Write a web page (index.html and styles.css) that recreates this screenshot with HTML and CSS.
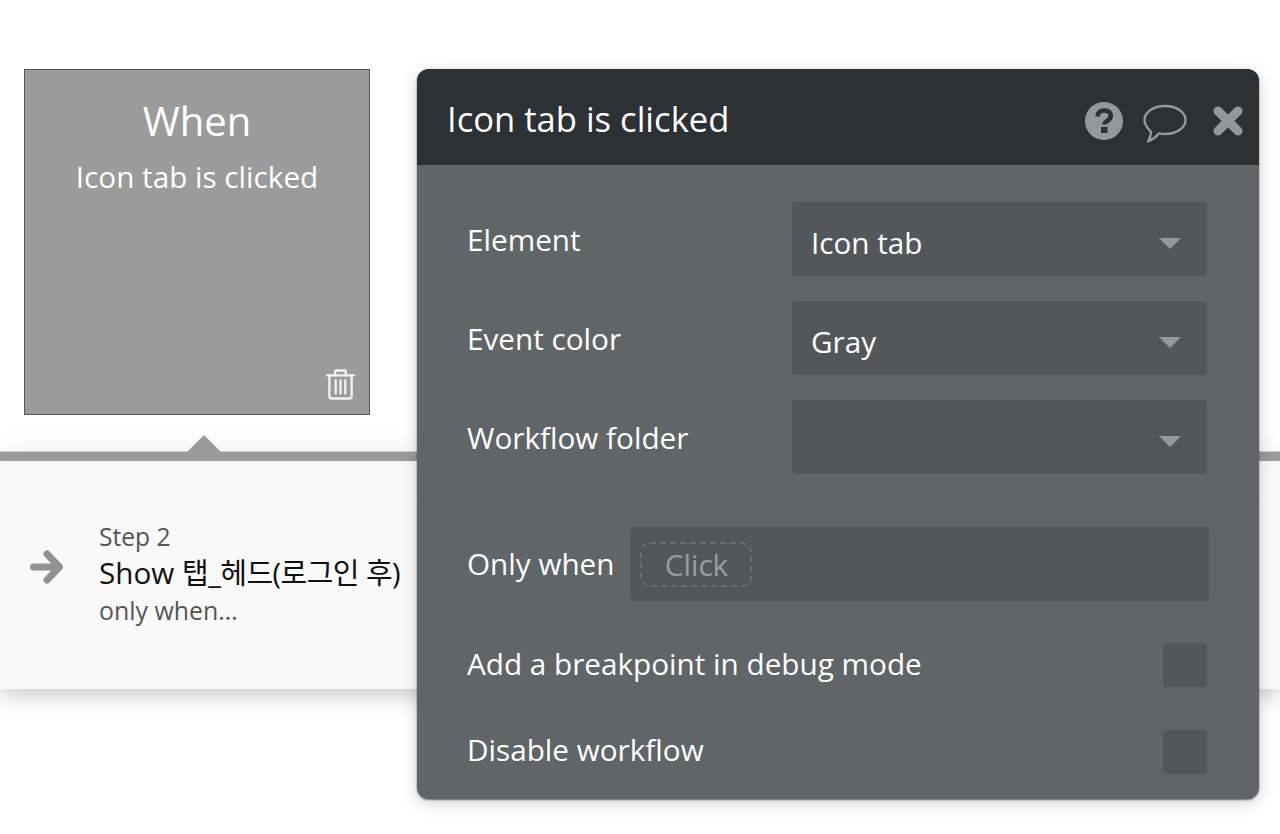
FILE: index.html
```html
<!DOCTYPE html>
<html lang="en">
<head>
<meta charset="utf-8">
<title>Icon tab is clicked</title>
<link rel="stylesheet" href="styles.css">
</head>
<body>
<main class="canvas">
  <section class="when-card">
    <div class="when-title">When</div>
    <div class="when-sub">Icon tab is clicked</div>
    <svg class="trash" viewBox="0 0 30 32" width="29" height="32" fill="none" stroke="#f2f2f2" stroke-width="2.4" stroke-linejoin="round" stroke-linecap="round">
      <path d="M1 7h28"/>
      <path d="M9.500 7V3.500Q9.500 2 11 2h8Q20.500 2 20.500 3.500V7"/>
      <path d="M3.500 7v22q0 2 2 2h19q2 0 2-2V7"/>
      <path d="M10 12v14M15 12v14M20 12v14"/>
    </svg>
  </section>
  <div class="rail"></div>
  <section class="step">
    <svg class="step-arrow" viewBox="0 0 33 34" width="33" height="34"><path d="M3.500 17H28M17 4l12.500 13L17 30" fill="none" stroke="#929292" stroke-width="7" stroke-linecap="round" stroke-linejoin="round"/></svg>
    <div class="step-text">
      <div class="step-num">Step 2</div>
      <div class="step-name">Show <span class="ko">탭_헤드(로그인 후)</span></div>
      <div class="step-cond">only when...</div>
    </div>
  </section>

  <aside class="palette">
    <header class="pal-head">
      <h1 class="pal-title">Icon tab is clicked</h1>
      <div class="pal-icons">
        <svg viewBox="0 0 40 40" width="40" height="40"><circle cx="20" cy="20" r="19" fill="#93999b"/><path d="M13.500 15.500q.5-6 6.700-6 6.500 0 6.500 5.500 0 3-3.500 5-2.700 1.500-2.700 3.500" fill="none" stroke="#2b3134" stroke-width="4.500"/><rect x="17" y="26" width="6.500" height="6" fill="#2b3134"/></svg>
        <svg viewBox="0 0 46 46" width="46" height="46"><path d="M23 8c11.500 0 20.500 6 20.500 14s-9 14-20.500 14c-2 0-4-.2-6-.6-2.500 3-6 6-11 8 2-3 3-6 3-9.600C5.500 30.500 2.500 26.500 2.500 22c0-8 9-14 20.500-14z" fill="none" stroke="#93999b" stroke-width="2.400" stroke-linejoin="round"/></svg>
        <svg class="close" viewBox="0 0 32 32" width="32" height="32"><path d="M6 6l20 20M26 6L6 26" fill="none" stroke="#93999b" stroke-width="9" stroke-linecap="round"/></svg>
      </div>
    </header>
    <div class="pal-body">
      <div class="rows">
        <div class="row"><span class="label">Element</span><div class="select"><span>Icon tab</span><i class="caret"></i></div></div>
        <div class="row"><span class="label">Event color</span><div class="select"><span>Gray</span><i class="caret"></i></div></div>
        <div class="row"><span class="label">Workflow folder</span><div class="select"><span></span><i class="caret"></i></div></div>
      </div>
      <div class="lower">
        <div class="when-row">
          <span class="label">Only when</span>
          <div class="expr"><span class="click">Click</span></div>
        </div>
        <div class="check-row"><span class="label">Add a breakpoint in debug mode</span><span class="check"></span></div>
        <div class="check-row check-last"><span class="label">Disable workflow</span><span class="check"></span></div>
      </div>
    </div>
  </aside>
</main>
</body>
</html>
```
FILE: styles.css
```css
html, body { margin: 0; padding: 0; background: #fff; }
body { font-family: "Open Sans", "Noto Sans CJK KR", sans-serif; }
.canvas { position: relative; width: 1280px; height: 834px; overflow: hidden; padding-top: 69px; box-sizing: border-box; }

.when-card { position: relative; box-sizing: border-box; width: 346px; height: 346px; margin-left: 24px; background: #9b9b9b; border: 1px solid #55595b; color: #fff; text-align: center; }
.when-title { font-size: 40px; line-height: 54px; margin-top: 24px; }
.when-sub { font-size: 29.7px; line-height: 40px; margin-top: 9px; }
.trash { position: absolute; right: 14px; bottom: 14px; }

.rail { position: relative; height: 10px; margin-top: 36px; background: #9b9b9b; box-shadow: 0 -8px 20px rgba(0,0,0,.05); border-top: 1px solid #d0d0d0; box-sizing: border-box; }
.rail::before { content: ""; position: absolute; left: 187px; top: -17px; border: 17px solid transparent; border-top: 0; border-bottom-color: #9b9b9b; }

.step { display: flex; align-items: flex-start; height: 228px; background: #f9f9f9; box-shadow: 0 6px 22px rgba(0,0,0,.22); }
.step-arrow { margin: 89px 0 0 30px; flex: none; }
.step-text { margin: 59px 0 0 36px; }
.step-num { font-size: 24.6px; line-height: 33px; color: #555; }
.step-name { font-size: 29.7px; line-height: 40px; color: #111; white-space: nowrap; }
.ko { font-size: 29px; letter-spacing: -.55px; }
.step-cond { font-size: 24.9px; line-height: 35px; color: #555; }

.palette { position: absolute; left: 417px; top: 69px; width: 842px; height: 730px; border-radius: 12px; overflow: hidden; background: #606568; color: #fff; box-shadow: 0 1px 2px rgba(0,0,0,.55), 0 4px 16px rgba(0,0,0,.18); }
.pal-head { display: flex; align-items: center; justify-content: space-between; box-sizing: border-box; height: 96px; padding: 4px 15px 0 30px; background: #2b3134; }
.pal-title { margin: 0; font-weight: 400; font-size: 34.6px; line-height: 46px; }
.pal-icons { display: flex; align-items: center; gap: 18px; margin-top: 4px; }
.close { margin-left: 6px; }

.rows { display: flex; flex-direction: column; gap: 25px; padding: 37px 52px 25px 50px; border-bottom: 1px solid #575c5f; }
.row { display: flex; align-items: center; justify-content: space-between; }
.label { font-size: 29.7px; line-height: 40px; }
.row .label { margin-top: 1px; }
.select { display: flex; align-items: center; justify-content: space-between; box-sizing: border-box; width: 415px; height: 74px; padding: 0 26px 0 19px; background: #53575a; border-radius: 3px; font-size: 29.7px; line-height: 40px; }
.select span { margin-top: 8px; }
.caret { margin-top: 8px; border: 11px solid transparent; border-bottom: 0; border-top: 11px solid #93999b; }

.lower { padding: 27px 52px 0 50px; }
.when-row { display: flex; align-items: center; gap: 16px; margin-right: -2px; }
.expr { flex: 1; height: 74px; display: flex; align-items: center; padding-left: 10px; background: #53575a; border-radius: 3px; }
.click { box-sizing: border-box; width: 112px; height: 45px; display: flex; align-items: center; justify-content: center; border: 2px dashed #6a6e71; border-radius: 10px; color: #9a9d9f; font-size: 29.7px; }
.check-row { display: flex; align-items: center; justify-content: space-between; height: 44px; margin-top: 42px; }
.check-row .label { margin-bottom: 3px; }
.check-row.check-last { margin-top: 43px; }
.check-last .label { margin-bottom: 5px; }
.check { width: 44px; height: 44px; background: #53575a; border-radius: 3px; }
```
